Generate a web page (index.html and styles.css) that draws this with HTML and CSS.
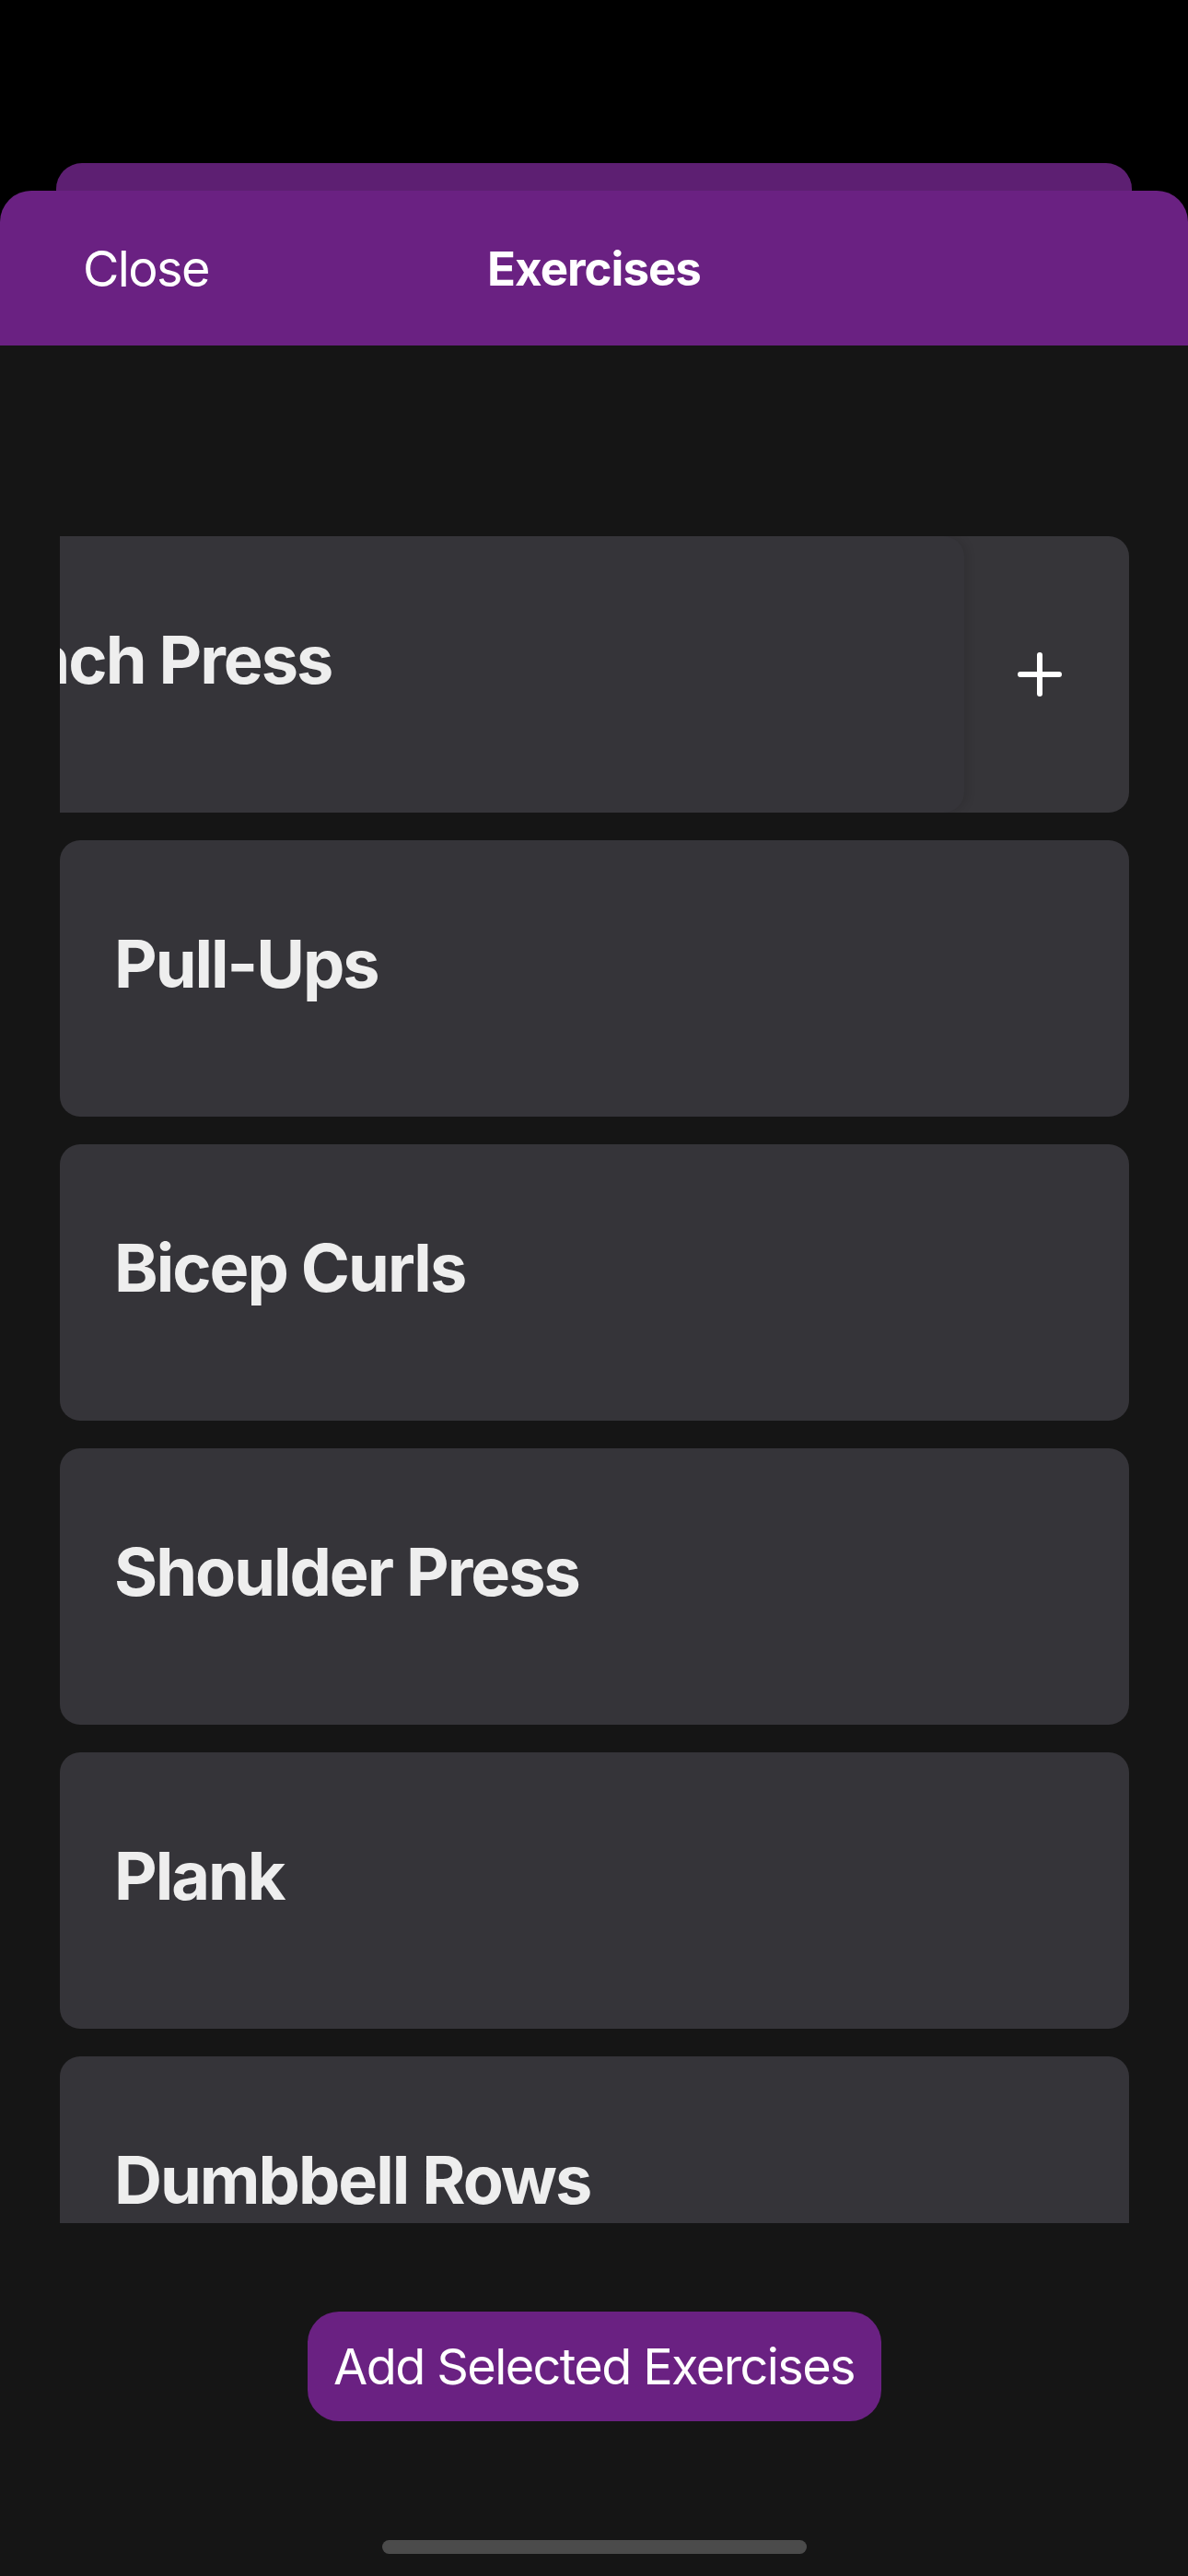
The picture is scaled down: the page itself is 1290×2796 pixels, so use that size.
FILE: index.html
```html
<!DOCTYPE html>
<html lang="en">
<head>
<meta charset="utf-8">
<title>Exercises</title>
<link rel="stylesheet" href="styles.css">
</head>
<body>
<div class="screen">
  <div class="back-sheet"></div>
  <div class="sheet">
    <header class="header">
      <span class="close">Close</span>
      <h1 class="title">Exercises</h1>
      <span class="spacer"></span>
    </header>
    <div class="viewport">
      <div class="list">
        <div class="row row-swiped">
          <div class="card card-shifted"><span class="name">Bench Press</span></div>
          <div class="action">
            <svg class="plus" width="48" height="48" viewBox="0 0 48 48" aria-hidden="true">
              <path d="M24 3 V45 M3 24 H45" stroke="#ffffff" stroke-width="6" stroke-linecap="round" fill="none"/>
            </svg>
          </div>
        </div>
        <div class="row"><div class="card"><span class="name">Pull-Ups</span></div></div>
        <div class="row"><div class="card"><span class="name">Bicep Curls</span></div></div>
        <div class="row"><div class="card"><span class="name">Shoulder Press</span></div></div>
        <div class="row"><div class="card"><span class="name">Plank</span></div></div>
        <div class="row"><div class="card"><span class="name">Dumbbell Rows</span></div></div>
      </div>
    </div>
    <footer class="footer">
      <button class="add-btn" type="button">Add Selected Exercises</button>
      <div class="home-indicator"></div>
    </footer>
  </div>
</div>
</body>
</html>
```

FILE: styles.css
```css
* { box-sizing: border-box; }

html, body {
  margin: 0;
  padding: 0;
  background: #000000;
}

body {
  font-family: Inter, "Noto Sans", "Liberation Sans", sans-serif;
  color: #ffffff;
}

.screen {
  width: 1290px;
  height: 2796px;
  display: flex;
  flex-direction: column;
  padding-top: 177px;
  overflow: hidden;
}

.back-sheet {
  flex: 0 0 30px;
  margin: 0 61px;
  background: #5d1f72;
  border-radius: 28px 28px 0 0;
}

.sheet {
  flex: 1 1 auto;
  display: flex;
  flex-direction: column;
  background: #151515;
  border-radius: 34px 34px 0 0;
  overflow: hidden;
}

.header {
  flex: 0 0 168px;
  background: #6a2182;
  display: grid;
  grid-template-columns: 1fr auto 1fr;
  align-items: center;
  padding: 0 90px;
}

.close {
  font-size: 54px;
  font-weight: 400;
  letter-spacing: -1.6px;
  color: #ffffff;
  justify-self: start;
}

.title {
  margin: 0;
  font-size: 51px;
  font-weight: 700;
  letter-spacing: -1px;
  color: #ffffff;
}

.viewport {
  flex: 0 0 2038px;
  overflow: hidden;
  padding: 207px 64px 0 65px;
}

.list {
  display: flex;
  flex-direction: column;
  gap: 30px;
}

.row {
  height: 300px;
  flex: 0 0 300px;
  display: flex;
}

.row-swiped {
  overflow: hidden;
  background: #363539;
  border-radius: 0 22px 22px 0;
}

.card {
  flex: 0 0 100%;
  height: 300px;
  background: #353439;
  border-radius: 22px;
  padding: 98px 40px 0 59px;
  white-space: nowrap;
}

.card-shifted {
  margin-left: -179px;
  box-shadow: 4px 0 10px rgba(0, 0, 0, 0.1);
  position: relative;
  z-index: 1;
}

.name {
  display: block;
  font-size: 72px;
  line-height: 72px;
  font-weight: 700;
  letter-spacing: -2px;
  color: #eeeeee;
}

.action {
  flex: 0 0 179px;
  display: flex;
  align-items: center;
  justify-content: center;
  padding-right: 16px;
}

.plus {
  display: block;
}

.footer {
  flex: 1 1 auto;
  display: flex;
  flex-direction: column;
  align-items: center;
  padding-top: 96px;
}

.add-btn {
  width: 623px;
  height: 119px;
  border: none;
  border-radius: 34px;
  background: #6a2182;
  color: #ffffff;
  font-family: Inter, "Noto Sans", "Liberation Sans", sans-serif;
  font-size: 54px;
  font-weight: 400;
  letter-spacing: -1.6px;
  padding: 0;
}

.home-indicator {
  margin-top: 129px;
  width: 461px;
  height: 15px;
  border-radius: 8px;
  background: #4b4b4b;
}
```
